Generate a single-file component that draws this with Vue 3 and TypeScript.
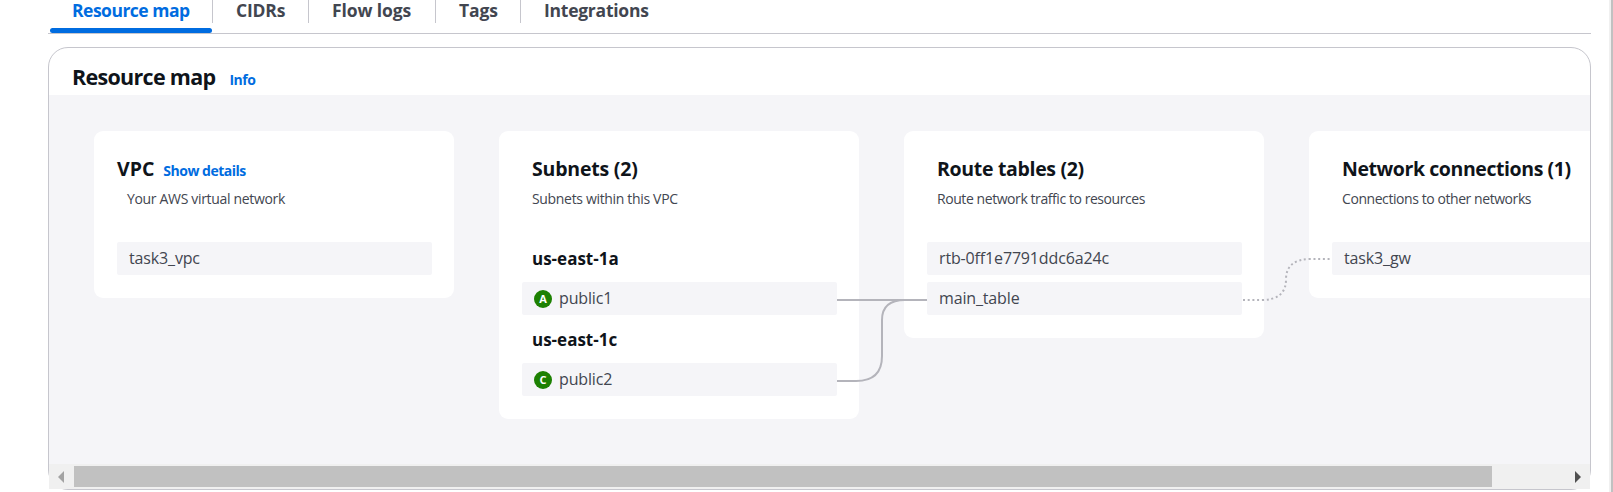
<script setup lang="ts">
interface Resource {
  name: string
  zone?: string
  badge?: string
}
interface Column {
  id: string
  title: string
  description: string
  action?: string
  resources: Resource[]
}

const tabs: { label: string; id: string }[] = [
  { label: 'Resource map', id: 'map-tab' },
  { label: 'CIDRs', id: 'cidrs' },
  { label: 'Flow logs', id: 'logs' },
  { label: 'Tags', id: 'tags' },
  { label: 'Integrations', id: 'integrations' },
]

const columns: Column[] = [
  {
    id: 'vpc',
    title: 'VPC',
    description: 'Your AWS virtual network',
    action: 'Show details',
    resources: [{ name: 'task3_vpc' }],
  },
  {
    id: 'subnets',
    title: 'Subnets (2)',
    description: 'Subnets within this VPC',
    resources: [
      { name: 'public1', zone: 'us-east-1a', badge: 'A' },
      { name: 'public2', zone: 'us-east-1c', badge: 'C' },
    ],
  },
  {
    id: 'routes',
    title: 'Route tables (2)',
    description: 'Route network traffic to resources',
    resources: [{ name: 'rtb-0ff1e7791ddc6a24c' }, { name: 'main_table' }],
  },
  {
    id: 'network',
    title: 'Network connections (1)',
    description: 'Connections to other networks',
    resources: [{ name: 'task3_gw' }],
  },
]
</script>

<template>
  <div class="page">
    <main class="content">
      <nav class="tabs">
        <a v-for="(tab, i) in tabs" :key="tab.id" class="tab" :class="[tab.id, { active: i === 0 }]">
          <span class="tab-label">{{ tab.label }}</span>
        </a>
      </nav>
      <section class="panel">
        <header class="panel-head">
          <h2>Resource map</h2>
          <a class="info">Info</a>
        </header>
        <div class="map">
          <article v-for="col in columns" :key="col.id" class="card" :class="col.id">
            <div class="card-head">
              <h3>{{ col.title }}</h3>
              <a v-if="col.action" class="details">{{ col.action }}</a>
            </div>
            <p class="description">{{ col.description }}</p>
            <div class="rows">
              <template v-for="r in col.resources" :key="r.name">
                <h4 v-if="r.zone">{{ r.zone }}</h4>
                <div class="row">
                  <span v-if="r.badge" class="badge">{{ r.badge }}</span>
                  <span class="name">{{ r.name }}</span>
                </div>
              </template>
            </div>
          </article>
          <svg class="links" width="1541" height="369" fill="none" stroke="#b4b4bb" stroke-width="2">
            <path d="M788 205H878" />
            <path d="M788 286H807Q833 286 833 261V225Q833 205 856 205H878" />
            <path
              d="M1194 205H1212Q1237 205 1237 184.500Q1237 164 1262 164H1283"
              stroke-dasharray="2 2.700"
            />
          </svg>
        </div>
        <div class="scrollbar">
          <svg class="arrow" width="25" height="25"><path d="M15 7v12L9 13z" fill="#a3a3a3" /></svg>
          <div class="thumb"></div>
          <svg class="arrow" width="25" height="25"><path d="M10 7v12L16 13z" fill="#505050" /></svg>
        </div>
      </section>
    </main>
    <div class="page-scroll"></div>
  </div>
</template>

<style>
body {
  margin: 0;
  overflow: hidden;
}
</style>

<style scoped>
* {
  box-sizing: border-box;
}
.page {
  width: 1613px;
  height: 492px;
  overflow: hidden;
  display: flex;
  justify-content: space-between;
  background: #fff;
  font-family: 'Open Sans', 'Noto Sans', sans-serif;
  color: #424650;
  white-space: nowrap;
}
.content {
  width: 1543px;
  margin-left: 48px;
}
.tabs {
  height: 34px;
  display: flex;
  border-bottom: 1px solid #c6c6cd;
}
.tab {
  height: 33px;
  position: relative;
  padding-left: 24px;
  font-size: 17.5px;
  font-weight: 700;
  line-height: 24px;
  letter-spacing: -0.1px;
}
.tab:not(.active) {
  padding-left: 23px;
}
.tab-label {
  display: block;
  margin-top: -2px;
}
.tab:not(:last-child)::before {
  content: '';
  position: absolute;
  right: 0;
  top: 0;
  width: 1px;
  height: 23px;
  background: #c6c6cd;
}
.tab.map-tab {
  width: 165px;
  letter-spacing: -0.5px;
}
.tab.cidrs {
  width: 96px;
  letter-spacing: -0.2px;
}
.tab.logs {
  width: 127px;
}
.tab.tags {
  width: 85px;
}
.tab.integrations {
  letter-spacing: -0.25px;
}
.tab.active {
  color: #006ce0;
}
.tab.active::after {
  content: '';
  position: absolute;
  left: 2px;
  right: 1px;
  bottom: 0;
  height: 5px;
  border-radius: 3px;
  background: #006ce0;
}
.panel {
  margin-top: 13px;
  height: 443px;
  border: 1px solid #c6c6cd;
  border-radius: 20px;
}
.panel-head {
  height: 47px;
  padding-left: 23px;
  display: flex;
  align-items: baseline;
  gap: 14px;
}
h2,
h3,
h4,
p {
  margin: 0;
}
h2 {
  font-size: 21.5px;
  letter-spacing: -0.7px;
  line-height: 57px;
  color: #0f141a;
}
.info,
.details {
  font-size: 14px;
  font-weight: 700;
  letter-spacing: -0.5px;
  color: #006ce0;
}
.map {
  height: 369px;
  position: relative;
  padding: 36px 0 0 45px;
  overflow: hidden;
  display: flex;
  align-items: flex-start;
  gap: 45px;
  background: #f5f5f8;
}
.card {
  flex: 0 0 360px;
  padding: 23px 22px 23px 23px;
  border-radius: 9px;
  background: #fff;
}
.card-head {
  height: 33px;
  padding-left: 10px;
  display: flex;
  align-items: baseline;
  gap: 9px;
}
.vpc .card-head {
  padding-left: 0;
}
h3 {
  font-size: 19.5px;
  line-height: 30px;
  color: #0f141a;
}
.subnets h3 {
  letter-spacing: -0.2px;
}
.routes h3 {
  letter-spacing: -0.32px;
}
.network h3 {
  letter-spacing: -0.42px;
}
.description {
  height: 24px;
  padding-left: 10px;
  font-size: 14px;
  letter-spacing: -0.33px;
  line-height: 24px;
}
.routes .description,
.network .description {
  letter-spacing: -0.43px;
}
.rows {
  margin-top: 31px;
  display: grid;
  gap: 7px;
}
.row {
  height: 33px;
  padding-left: 12px;
  display: flex;
  align-items: center;
  border-radius: 2px;
  background: #f5f5f8;
}
.name {
  margin-top: -2px;
  font-size: 16px;
  letter-spacing: -0.15px;
  line-height: 30px;
}
h4 {
  height: 34px;
  padding-left: 10px;
  font-size: 17px;
  line-height: 36px;
  color: #0f141a;
}
h4:first-child {
  height: 33px;
  line-height: 34px;
}
.badge {
  width: 18px;
  height: 18px;
  margin-right: 7px;
  border-radius: 50%;
  background: #1d8102;
  color: #fff;
  font-size: 11px;
  font-weight: 700;
  line-height: 17px;
  text-align: center;
}
.links {
  position: absolute;
  left: 0;
  top: 0;
}
.scrollbar {
  height: 25px;
  display: flex;
  align-items: center;
  background: #f0f0f0;
}
.thumb {
  width: 1418px;
  height: 21px;
  background: #c1c1c1;
}
.arrow:last-child {
  margin-left: auto;
}
.page-scroll {
  width: 4px;
  height: 492px;
  border-left: 2px solid #f0f0f0;
  background: #c1c1c1;
}
</style>
